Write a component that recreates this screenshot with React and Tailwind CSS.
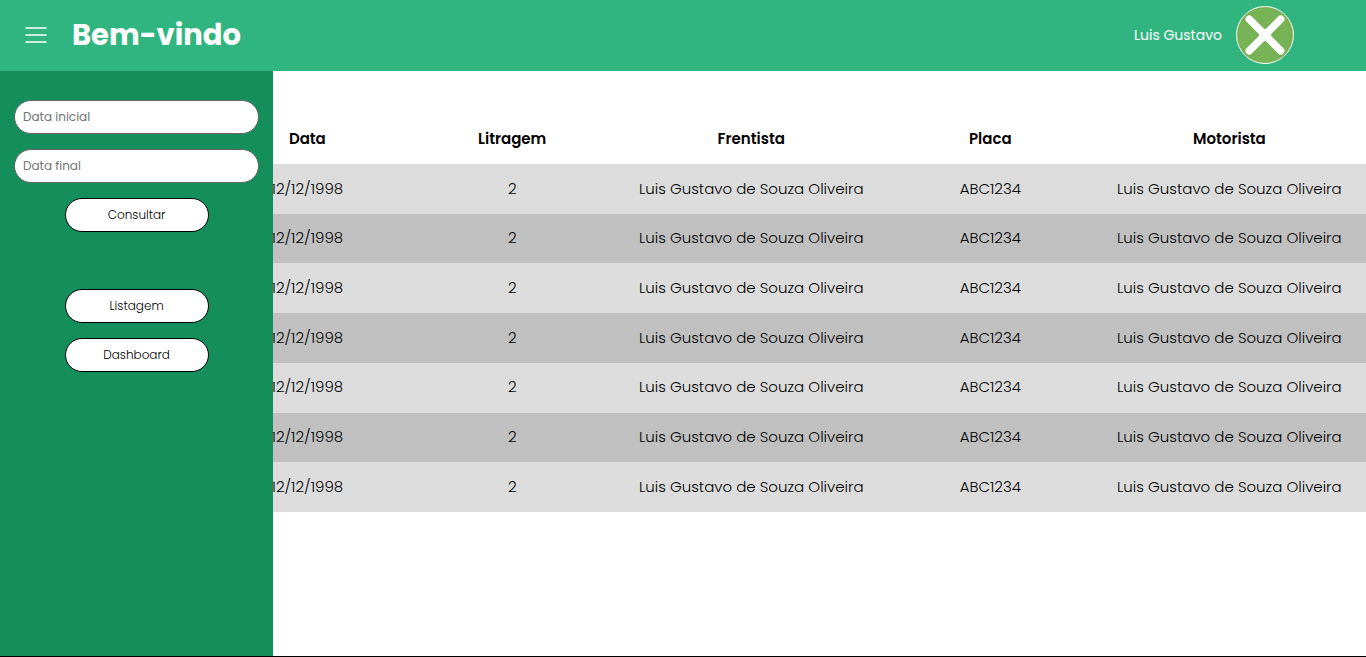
const columns = [
  { key: "data", label: "Data", width: "w-[15vw]" },
  { key: "litragem", label: "Litragem", width: "w-[15vw]" },
  { key: "frentista", label: "Frentista", width: "w-[20vw]" },
  { key: "placa", label: "Placa", width: "w-[15vw]" },
  { key: "motorista", label: "Motorista", width: "w-[20vw]" },
];

const rows = Array.from({ length: 7 }, (_, id) => ({
  id,
  data: "12/12/1998",
  litragem: "2",
  frentista: "Luis Gustavo de Souza Oliveira",
  placa: "ABC1234",
  motorista: "Luis Gustavo de Souza Oliveira",
}));

function DateField({ id, label }) {
  return (
    <input
      id={id}
      type="text"
      aria-label={label}
      placeholder={label}
      className="h-[34px] w-full rounded-full border border-[#666] bg-white px-2 text-xs text-black placeholder:text-[#757575]"
    />
  );
}

function PillButton({ children }) {
  return (
    <button
      type="button"
      className="h-[34px] w-36 rounded-full border border-black bg-white text-xs font-light text-black"
    >
      {children}
    </button>
  );
}

function Header() {
  return (
    <header className="flex h-[71px] items-center bg-[#31b580] pr-[72px] pb-px pl-6 text-white">
      <button type="button" aria-label="Menu" className="mr-6">
        <svg width="24" height="24" viewBox="0 0 24 24" stroke="white" strokeWidth="1.5" strokeLinecap="round">
          <path d="M2 5h20M2 12h20M2 19h20" />
        </svg>
      </button>
      <h1 className="text-[29px] leading-[45px] font-bold">Bem-vindo</h1>
      <div className="ml-auto flex items-center gap-3.5">
        <span className="text-sm">Luis Gustavo</span>
        <svg width="58" height="58" viewBox="0 0 58 58" aria-hidden="true">
          <circle cx="29" cy="29" r="28.5" fill="#77b255" stroke="white" />
          <path
            d="M13.2 13.2L44.8 44.8M44.8 13.2L13.2 44.8"
            stroke="white"
            strokeWidth="7.4"
            strokeLinecap="round"
          />
          <path d="M29 22.5L35.5 29L29 35.5L22.5 29Z" fill="white" />
        </svg>
      </div>
    </header>
  );
}

function Sidebar() {
  return (
    <aside className="z-10 col-start-1 row-start-1 flex w-1/5 flex-col items-center bg-[#148f5c] px-3.5 pt-[29px]">
      <form className="flex w-full flex-col items-center gap-[15px]">
        <DateField id="data-inicial" label="Data inicial" />
        <DateField id="data-final" label="Data final" />
        <PillButton>Consultar</PillButton>
      </form>
      <nav className="mt-[57px] flex flex-col gap-[15px]">
        <PillButton>Listagem</PillButton>
        <PillButton>Dashboard</PillButton>
      </nav>
    </aside>
  );
}

export default function App() {
  return (
    <div className="flex min-h-screen flex-col border-b border-black bg-white font-[Poppins,Inter,sans-serif] text-black">
      <Header />
      <div className="grid flex-1 grid-cols-1">
        <Sidebar />
        <main className="col-start-1 row-start-1 pt-[43px] pl-[15%]">
          <table className="h-[398px] w-full table-fixed text-center text-[15px] font-light">
            <thead>
              <tr className="h-[50px]">
                {columns.map((c) => (
                  <th key={c.key} scope="col" className={`font-semibold ${c.width}`}>
                    {c.label}
                  </th>
                ))}
              </tr>
            </thead>
            <tbody>
              {rows.map((row) => (
                <tr key={row.id} className="odd:bg-[#dcdcdc] even:bg-[#c0c0c0]">
                  {columns.map((c) => (
                    <td key={c.key}>{row[c.key]}</td>
                  ))}
                </tr>
              ))}
            </tbody>
          </table>
        </main>
      </div>
    </div>
  );
}
